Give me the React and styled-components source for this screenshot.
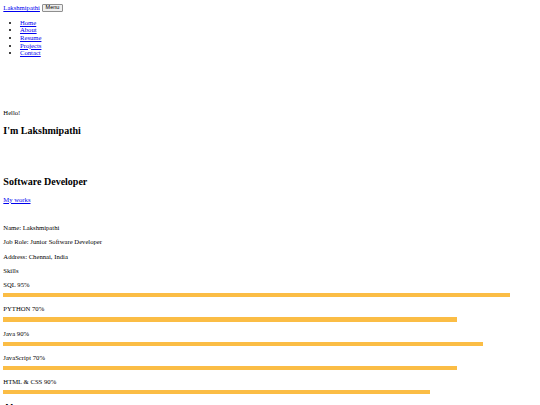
import React from 'react';
import styled, { createGlobalStyle } from 'styled-components';

const skills = [
  { name: 'SQL', label: '95%', fill: 95 },
  { name: 'PYTHON', label: '70%', fill: 85 },
  { name: 'Java', label: '90%', fill: 90 },
  { name: 'JavaScript', label: '70%', fill: 85 },
  { name: 'HTML & CSS', label: '90%', fill: 80 },
];

const links = ['Home', 'About', 'Resume', 'Projects', 'Contact'];

const App = () => {
  return (
    <Page>
      <GlobalStyle />
      <Header>
        <Link href="#">Lakshmipathi</Link>
        <MenuButton>Menu</MenuButton>
      </Header>
      <NavList>
        {links.map((l) => (
          <li key={l}>
            <Link href="#">{l}</Link>
          </li>
        ))}
      </NavList>

      <Hero>
        <Greeting>Hello!</Greeting>
        <Title>I'm Lakshmipathi</Title>
        <Role>Software Developer</Role>
        <Works>
          <Link href="#">My works</Link>
        </Works>
      </Hero>

      <About>
        <Info>Name: Lakshmipathi</Info>
        <Info>Job Role: Junior Software Developer</Info>
        <Info>Address: Chennai, India</Info>
        <Info>Skills</Info>
        {skills.map((s) => (
          <Skill key={s.name}>
            <SkillLabel>
              {s.name} {s.label}
            </SkillLabel>
            <Track>
              <Bar style={{ width: s.fill + '%' }} />
            </Track>
          </Skill>
        ))}
        <SectionTitle>About</SectionTitle>
      </About>
    </Page>
  );
};

const GlobalStyle = createGlobalStyle`
  html, body {
    margin:0;
    padding:0;
    background:#fff;
  }
  body {
    font-family:"Liberation Serif", "Times New Roman", serif;
    font-size:6.67px;
    color:#000;
  }
`;

const Page = styled.div`
  padding:3.33px;
  height:405px;
  overflow:hidden;
  box-sizing:border-box;
`;

const Link = styled.a`
  color:#0000ee;
  text-decoration:underline;
`;

const Header = styled.header`
  display:flex;
  align-items:center;
  gap:2px;
  height:8.75px;
`;

const MenuButton = styled.button`
  font-family:"Liberation Sans", Arial, sans-serif;
  font-size:5.56px;
  height:8.3px;
  padding:0 2.6px;
  border:0.83px solid #8f8f8f;
  border-radius:1px;
  background:#efefef;
  color:#000;
  line-height:1;
`;

const NavList = styled.ul`
  margin:6.67px 0;
  padding-left:16.67px;
  list-style:disc;
  li {
    line-height:7.66px;
  }
`;

const Hero = styled.section`
  padding-top:45.5px;
`;

const Greeting = styled.p`
  margin:0;
  line-height:7.66px;
`;

const Title = styled.h2`
  font-size:10px;
  line-height:11.5px;
  margin:8.3px 0;
`;

const Role = styled(Title)`
  margin-top:39.5px;
`;

const Works = styled.p`
  margin:0;
  line-height:7.66px;
`;

const About = styled.section`
  padding-top:20.5px;
`;

const Info = styled.p`
  margin:0 0 6.67px;
  line-height:7.66px;
`;

const Skill = styled.div`
  margin-bottom:8px;
`;

const SkillLabel = styled.p`
  margin:0 0 4.3px;
  line-height:7.66px;
`;

const Track = styled.div`
  width:100%;
  height:4.2px;
`;

const Bar = styled.div`
  height:100%;
  background:#fbbd45;
`;

const SectionTitle = styled.h2`
  font-size:10px;
  line-height:11.5px;
  margin:5px 0 0;
`;

export default App;
